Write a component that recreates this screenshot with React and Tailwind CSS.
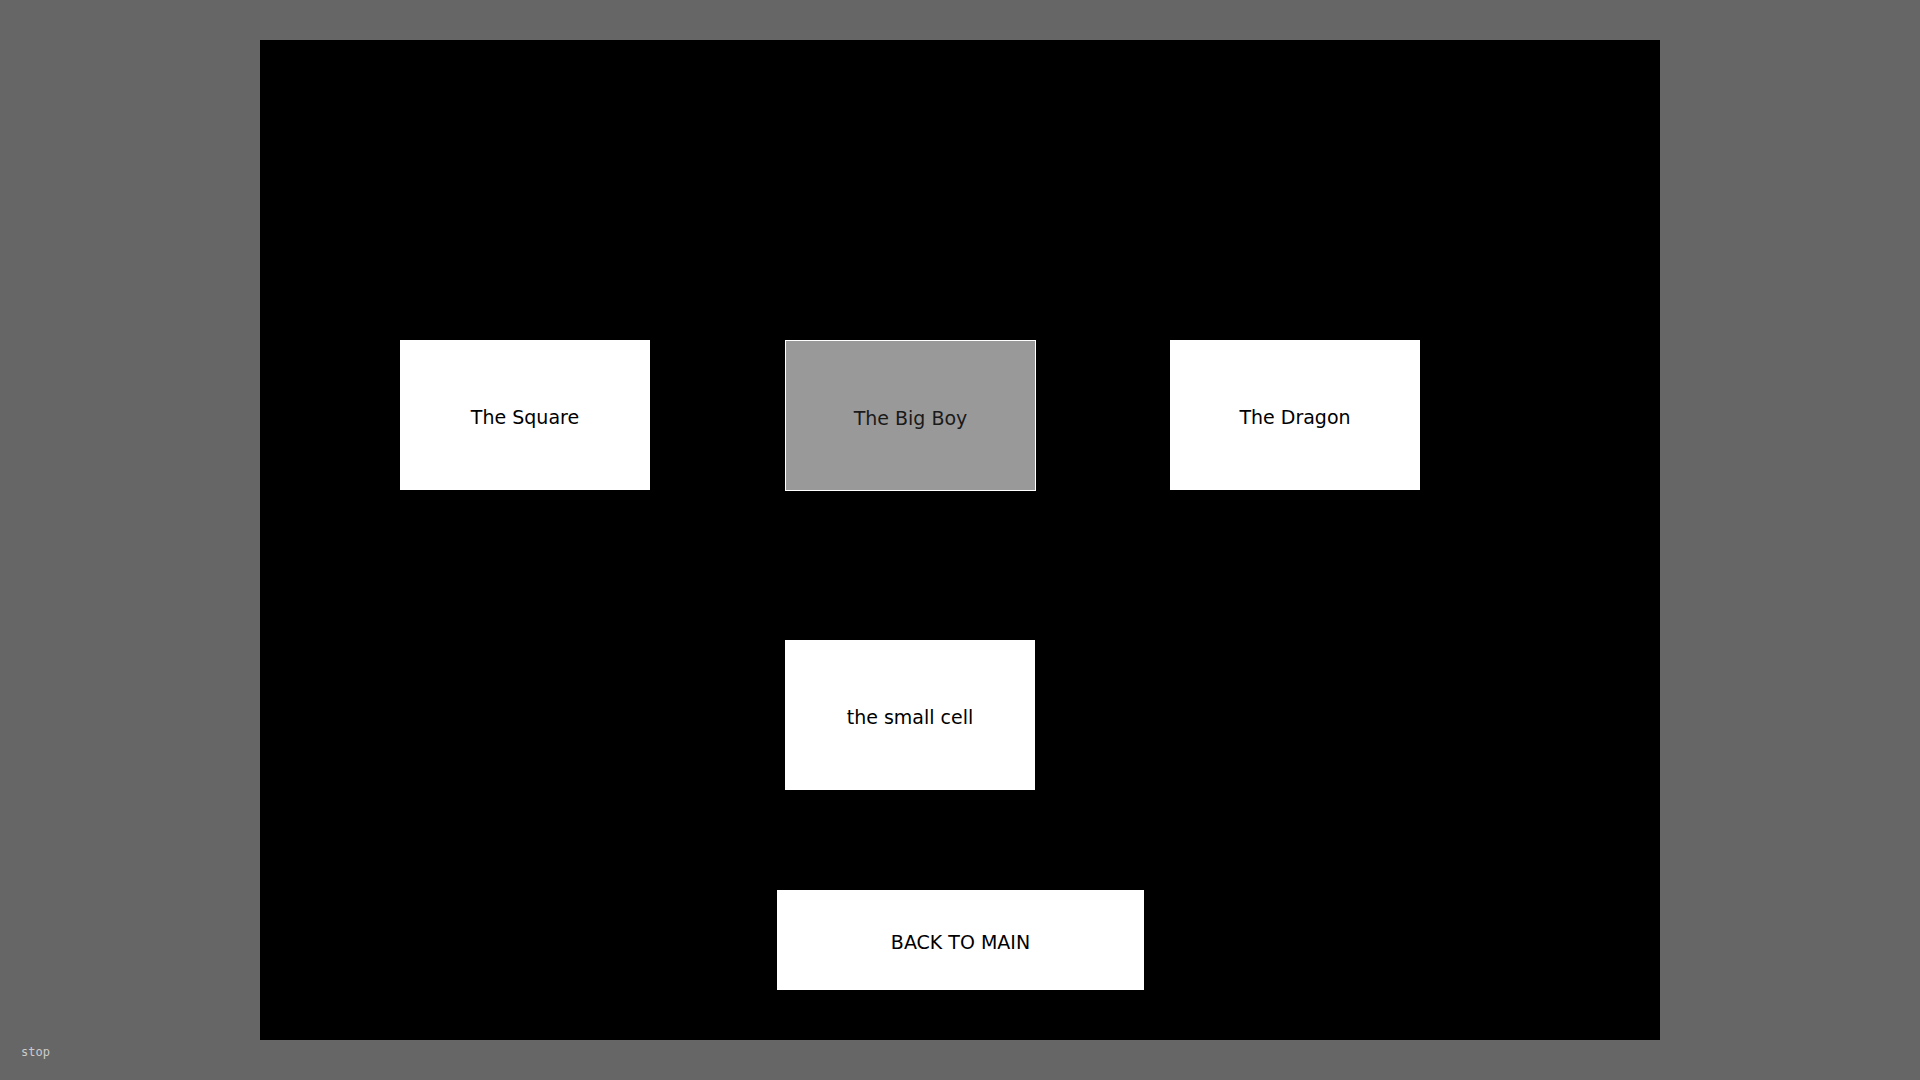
const cell = "flex items-center justify-center pt-[5px] text-[19px] font-['DejaVu_Sans',sans-serif]";

export default function App() {
  return (
    <div className="relative w-[1920px] h-[1080px] bg-[#666666] overflow-hidden">
      <div className="absolute left-[260px] top-[40px] w-[1400px] h-[1000px] bg-black flex flex-col pt-[300px]">
        {/* top row */}
        <div className="flex pl-[140px]">
          <div className={`${cell} w-[250px] h-[150px] bg-white text-black`}>The Square</div>
          <div className={`${cell} ml-[135px] w-[251px] h-[151px] bg-[#999999] border border-white text-[#1a1a1a]`}>
            The Big Boy
          </div>
          <div className={`${cell} ml-[134px] w-[250px] h-[150px] bg-white text-black`}>The Dragon</div>
        </div>
        {/* small cell */}
        <div className="pl-[525px] mt-[149px]">
          <div className={`${cell} w-[250px] h-[150px] bg-white text-black`}>the small cell</div>
        </div>
        {/* back */}
        <div className="pl-[517px] mt-[100px]">
          <div className={`${cell} w-[367px] h-[100px] bg-white text-black`}>BACK TO MAIN</div>
        </div>
      </div>
      <div className="absolute left-[21px] top-[1043px] text-[12px] text-[#cccccc] font-['DejaVu_Sans_Mono',monospace]">
        stop
      </div>
    </div>
  );
}
